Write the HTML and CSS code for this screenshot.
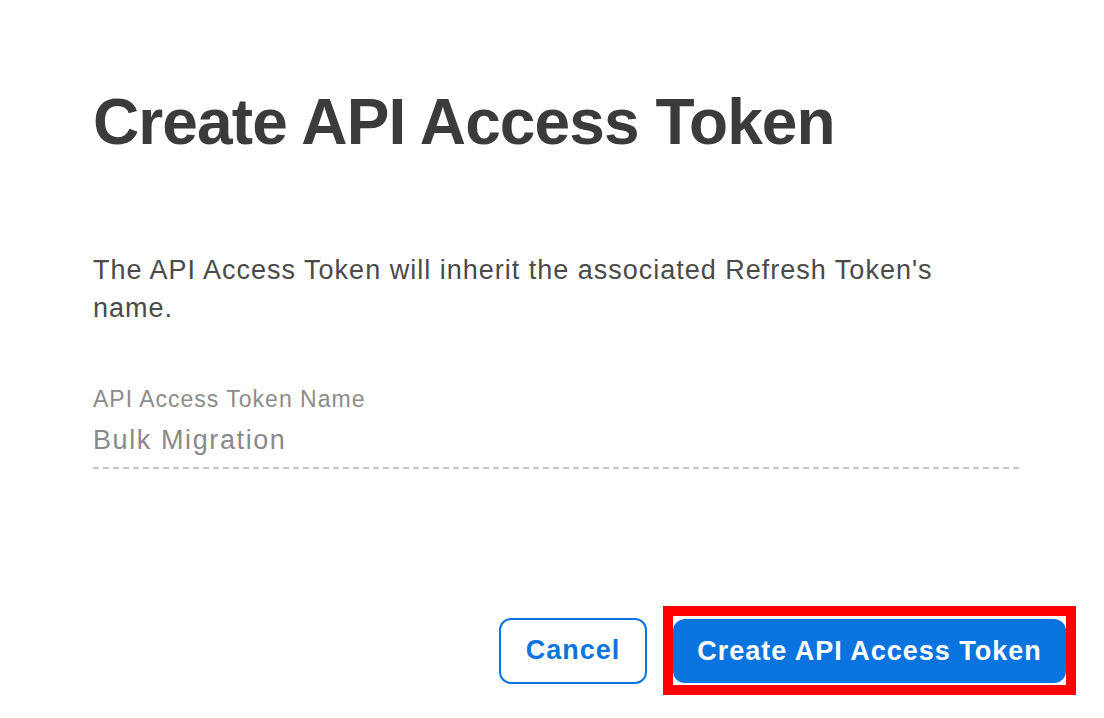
FILE: index.html
```html
<!DOCTYPE html>
<html>
<head>
<meta charset="utf-8">
<link rel="stylesheet" href="styles.css">
</head>
<body>
<div class="dialog">
  <h1 class="title">Create API Access Token</h1>
  <p class="desc">The API Access Token will inherit the associated Refresh Token's name.</p>
  <div class="field">
    <label class="label">API Access Token Name</label>
    <div class="value">Bulk Migration</div>
  </div>
  <div class="actions">
    <button class="btn btn-secondary">Cancel</button>
    <div class="highlight">
      <button class="btn btn-primary">Create API Access Token</button>
    </div>
  </div>
</div>
</body>
</html>
```
FILE: styles.css
```css
html, body {
  margin: 0;
  padding: 0;
  background: #ffffff;
}
body {
  width: 1104px;
  height: 718px;
  overflow: hidden;
  font-family: "Liberation Sans", Arial, sans-serif;
}
.dialog {
  display: flex;
  flex-direction: column;
  padding: 90px 28px 0 93px;
}
.title {
  margin: 0;
  font-size: 64px;
  line-height: 64px;
  font-weight: 700;
  color: #3b3b3b;
  letter-spacing: -0.9px;
}
.desc {
  margin: 97px 0 0 0;
  width: 880px;
  font-size: 27px;
  line-height: 38px;
  letter-spacing: 1px;
  color: #4a4a4a;
}
.field {
  margin-top: 57px;
  width: 927px;
  display: flex;
  flex-direction: column;
}
.label {
  font-size: 23px;
  line-height: 30px;
  letter-spacing: 1px;
  color: #8c8c8c;
}
.value {
  margin-top: 9px;
  font-size: 27px;
  line-height: 34px;
  letter-spacing: 1.6px;
  color: #8a8a8a;
  padding-bottom: 12px;
  background-image: repeating-linear-gradient(to right, #c8c8c8 0 6px, transparent 6px 10px);
  background-size: 100% 2px;
  background-position: left bottom;
  background-repeat: no-repeat;
}
.actions {
  margin-top: 137px;
  display: flex;
  justify-content: flex-end;
  align-items: center;
  gap: 16px;
}
.btn {
  font-family: "Liberation Sans", Arial, sans-serif;
  font-weight: 700;
  font-size: 27px;
  letter-spacing: 1px;
  border-radius: 12px;
  cursor: pointer;
  padding: 0;
}
.btn-secondary {
  width: 148px;
  height: 66px;
  background: #ffffff;
  color: #0b74de;
  border: 2px solid #0b74de;
}
.highlight {
  border: 10px solid #ff0000;
  padding: 3px 0 2px 0;
  display: flex;
}
.btn-primary {
  width: 393px;
  height: 64px;
  background: #0a74de;
  color: #ffffff;
  border: none;
}
```
